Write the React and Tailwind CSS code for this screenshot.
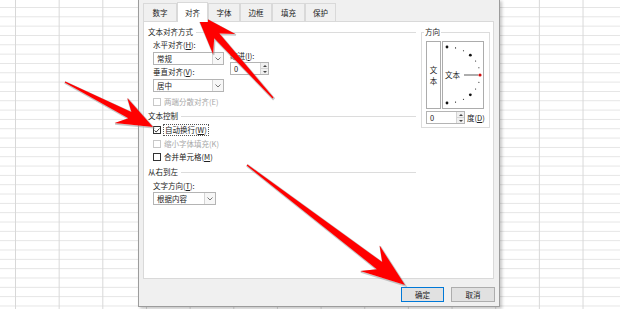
import React from 'react';

// ─── helpers ────────────────────────────────────────────────────────────────
const arrowPts = (tail, tip, headLen, barbW, neckLen, shaftW) => {
  const dx = tip[0] - tail[0];
  const dy = tip[1] - tail[1];
  const L = Math.hypot(dx, dy);
  const ux = dx / L, uy = dy / L;
  const nx = -uy, ny = ux;
  const p = (along, side) => [tip[0] - ux * along + nx * side, tip[1] - uy * along + ny * side];
  const pts = [
    [tail[0] + nx * 0.7, tail[1] + ny * 0.7],
    p(neckLen, shaftW),
    p(headLen, barbW),
    tip,
    p(headLen, -barbW),
    p(neckLen, -shaftW),
    [tail[0] - nx * 0.7, tail[1] - ny * 0.7],
  ];
  return pts.map(([x, y]) => `${x.toFixed(1)},${y.toFixed(1)}`).join(' ');
};

const ARROWS = [
  arrowPts([273, 98], [196, 13], 42, 15, 31, 3.5),
  arrowPts([65, 82], [153, 127], 36, 14, 26, 3.5),
  arrowPts([247, 165], [405, 285], 44, 16, 32, 4.5),
];

const Chevron = () => (
  <svg width="6" height="4" viewBox="0 0 6 4">
    <polyline points="0.5,0.5 3,3 5.5,0.5" fill="none" stroke="#555" strokeWidth="0.8" />
  </svg>
);

const Select = ({ label, w }) => (
  <div className={`flex h-[13px] ${w} border border-[#b4b4b4] bg-white`}>
    <span className="flex-1 pl-[3px] leading-[11px]">{label}</span>
    <span className="flex w-[11px] items-center justify-center border-l border-[#d4d4d4] bg-[#f7f7f7]">
      <Chevron />
    </span>
  </div>
);

const Spin = ({ w }) => (
  <div className={`flex h-[13px] ${w} border border-[#b4b4b4] bg-white`}>
    <span className="flex-1 pl-[3px] leading-[11px]">0</span>
    <span className="flex w-[8px] flex-col border-l border-[#d4d4d4]">
      <span className="flex flex-1 items-center justify-center border-b border-[#d4d4d4] bg-[#f0f0f0]">
        <svg width="4" height="2" viewBox="0 0 4 2"><polygon points="0,2 2,0 4,2" fill="#444" /></svg>
      </span>
      <span className="flex flex-1 items-center justify-center bg-[#f0f0f0]">
        <svg width="4" height="2" viewBox="0 0 4 2"><polygon points="0,0 4,0 2,2" fill="#444" /></svg>
      </span>
    </span>
  </div>
);

const Section = ({ title, className = '' }) => (
  <div className={`flex h-[10px] items-center ${className}`}>
    <span>{title}</span>
    <span className="ml-[3px] h-px flex-1 bg-[#dcdcdc]" />
  </div>
);

const Check = ({ checked, disabled, children, focus, className = '' }) => (
  <div className={`flex items-center pl-[5px] ${className}`}>
    <span className={`flex h-[8px] w-[8px] items-center justify-center border bg-white ${disabled ? 'border-[#c8c8c8]' : 'border-[#333]'}`}>
      {checked && (
        <svg width="6" height="5" viewBox="0 0 6 5">
          <polyline points="0.5,2.5 2.2,4 5.5,0.5" fill="none" stroke="#222" strokeWidth="0.9" />
        </svg>
      )}
    </span>
    <span className={`ml-[2px] px-px ${disabled ? 'text-[#a8a8a8]' : ''} ${focus ? 'border border-dotted border-[#555] leading-[10px]' : ''}`}>
      {children}
    </span>
  </div>
);

const TABS = [
  { t: '数字', w: 'w-[34px]' },
  { t: '对齐', w: 'w-[31px]', on: true },
  { t: '字体', w: 'w-[32px]' },
  { t: '边框', w: 'w-[32px]' },
  { t: '填充', w: 'w-[33px]' },
  { t: '保护', w: 'w-[31px]' },
];

// dial dots
const DOTS = [];
for (let a = -90; a <= 90; a += 15) {
  const r = (a * Math.PI) / 180;
  DOTS.push({ a, x: 4 + 33 * Math.cos(r), y: 33 + 28 * Math.sin(r) });
}

// ─── MAIN ───────────────────────────────────────────────────────────────────
export default function App() {
  return (
    <div className="relative h-[309px] w-[620px] overflow-hidden bg-white bg-[linear-gradient(to_right,#d8d8d8_1px,transparent_1px),linear-gradient(to_bottom,#e4e4e4_1px,transparent_1px)] bg-[size:43.67px_9.33px] bg-[position:15px_7px] font-['Noto_Sans_CJK_SC','Noto_Sans',sans-serif] text-[7.5px] text-[#222]">

      {/* Dialog window */}
      <div className="absolute left-[138px] top-[-1px] flex h-[308px] w-[362px] flex-col border-x border-b border-[#9c9c9c] bg-[#f0f0f0] pl-[4px] pr-[5px] pt-[4px] shadow-[2px_2px_3px_rgba(0,0,0,0.22)]">

        {/* Tabs */}
        <div className="flex h-[18px] items-end">
          {TABS.map(tab => (
            <div
              key={tab.t}
              className={`flex ${tab.w} items-center justify-center border border-b-0 border-[#d9d9d9] ${
                tab.on ? 'relative z-10 -mb-px h-[20px] bg-white' : 'h-[18px] bg-[#f0f0f0]'
              }`}>
              {tab.t}
            </div>
          ))}
        </div>

        {/* Panel */}
        <div className="flex h-[258px] w-[351px] border border-[#d9d9d9] bg-white">
          {/* left column */}
          <div className="flex w-[272px] flex-col pl-[4px]">
            <Section title="文本对齐方式" className="mt-[5px]" />

            <div className="flex">
              <div className="flex flex-col pl-[5px]">
                <div className="mt-[3px] flex h-[10px] items-center">水平对齐(<u>H</u>):</div>
                <div className="mt-[2px]"><Select label="常规" w="w-[71px]" /></div>
                <div className="mt-[2px] flex h-[10px] items-center">垂直对齐(<u>V</u>):</div>
                <div className="mt-[2px]"><Select label="居中" w="w-[71px]" /></div>
              </div>
              <div className="ml-[6px] flex flex-col">
                <div className="mt-[14px] flex h-[10px] items-center">缩进(<u>I</u>):</div>
                <div className="mt-px"><Spin w="w-[39px]" /></div>
              </div>
            </div>

            <Check disabled className="mt-[5px] h-[10px]">两端分散对齐(E)</Check>

            <Section title="文本控制" className="mt-[4px]" />
            <Check checked focus className="mt-[3px] h-[12px]">自动换行(<u>W</u>)</Check>
            <Check disabled className="mt-[3px] h-[10px]">缩小字体填充(K)</Check>
            <Check className="mt-[3px] h-[10px]">合并单元格(<u>M</u>)</Check>

            <Section title="从右到左" className="mt-[5px]" />
            <div className="mt-[4px] flex h-[10px] items-center pl-[5px]">文字方向(<u>T</u>):</div>
            <div className="mt-px pl-[5px]"><Select label="根据内容" w="w-[63px]" /></div>
          </div>

          {/* right column: 方向 */}
          <div className="relative ml-[5px] mt-[10px] flex h-[96px] w-[69px] flex-col border border-[#dcdcdc] pl-[4px] pt-[8px]">
            <span className="absolute -top-[6px] left-[2px] bg-white px-px leading-[10px]">方向</span>
            <div className="flex h-[68px]">
              <div className="flex w-[15px] flex-col items-center justify-center border border-[#acacac] leading-[11px]">
                <span>文</span>
                <span>本</span>
              </div>
              <div className="ml-px w-[42px] border border-[#acacac]">
                <svg width="40" height="66" viewBox="0 0 40 66">
                  {DOTS.map(d => (
                    <circle
                      key={d.a}
                      cx={d.x}
                      cy={d.y}
                      r={d.a === 0 ? 1.6 : d.a % 45 === 0 ? 1.4 : 0.6}
                      fill={d.a === 0 ? '#d01010' : '#111'}
                    />
                  ))}
                  <line x1="21" y1="33" x2="35" y2="33" stroke="#8a8a8a" strokeWidth="1.4" />
                  <text x="2" y="35.6" fontSize="7.5" fill="#222" fontFamily="Noto Sans CJK SC, sans-serif">文本</text>
                </svg>
              </div>
            </div>
            <div className="mt-[2px] flex items-center">
              <Spin w="w-[39px]" />
              <span className="ml-[2px]">度(<u>D</u>)</span>
            </div>
          </div>
        </div>

        {/* Buttons */}
        <div className="mt-[8px] flex justify-end gap-[7px]">
          <button className="flex h-[15px] w-[43px] items-center justify-center border border-[#0078d7] bg-[#e1e1e1]">确定</button>
          <button className="-mr-px flex h-[15px] w-[44px] items-center justify-center border border-[#adadad] bg-[#e1e1e1]">取消</button>
        </div>
      </div>

      {/* Red annotation arrows */}
      <svg className="pointer-events-none absolute left-0 top-0" width="620" height="309" viewBox="0 0 620 309">
        {ARROWS.map((pts, i) => (
          <g key={i}>
            <polygon points={pts} fill="none" stroke="#9a9a9a" strokeWidth="1.6" strokeOpacity="0.55" transform="translate(0.6,0.8)" />
            <polygon points={pts} fill="#ff0000" />
          </g>
        ))}
      </svg>
    </div>
  );
}
